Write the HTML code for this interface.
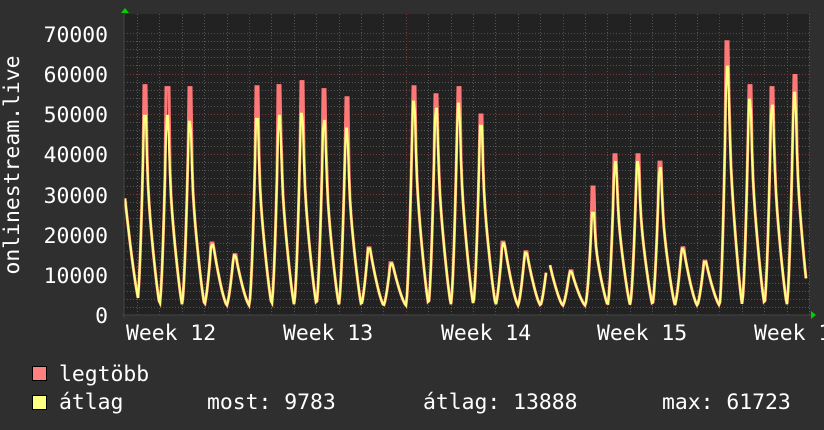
<!DOCTYPE html>
<html><head><meta charset="utf-8"><style>
html,body{margin:0;padding:0;background:#2f2f2f;}
body{width:824px;height:430px;overflow:hidden;position:relative;font-family:"DejaVu Sans Mono","Liberation Mono",monospace;color:#fff;}
svg{position:absolute;left:0;top:0;}
svg text{font-family:"DejaVu Sans Mono","Liberation Mono",monospace;font-size:21.4px;fill:#fff;}
</style></head><body>
<svg id="g" width="824" height="430" xmlns="http://www.w3.org/2000/svg">
<rect x="124" y="14" width="685" height="301" fill="#222222"/>
<g id="grid"></g>
<g id="lines"></g>
<line x1="122" y1="315" x2="814" y2="315" stroke="#444" stroke-width="1"/>
<line x1="124" y1="12" x2="124" y2="318" stroke="#444" stroke-width="1"/>
<polygon points="121,13 125,8 129,13" fill="#00d000"/>
<polygon points="811,311 816,315 811,319" fill="#00d000"/>
<g text-anchor="end">
<text x="108" y="42">70000</text>
<text x="108" y="82">60000</text>
<text x="108" y="122">50000</text>
<text x="108" y="162">40000</text>
<text x="108" y="203">30000</text>
<text x="108" y="243">20000</text>
<text x="108" y="283">10000</text>
<text x="108" y="323">0</text>
</g>
<text transform="translate(19,165) rotate(-90)" text-anchor="middle">onlinestream.live</text>
<text x="126" y="340">Week 12</text>
<text x="283" y="340">Week 13</text>
<text x="441" y="340">Week 14</text>
<text x="597" y="340">Week 15</text>
<text x="754" y="340">Week 1</text>
<rect x="32.5" y="366.5" width="14" height="14" fill="#ff8080" stroke="#000"/>
<rect x="32.5" y="395.5" width="14" height="14" fill="#ffff80" stroke="#000"/>
<text x="59" y="381">legtöbb</text>
<text x="59" y="409">átlag</text>
<text x="207" y="409">most: 9783</text>
<text x="423" y="409">átlag: 13888</text>
<text x="662" y="409">max: 61723</text>
</svg>
<script>
var NS="http://www.w3.org/2000/svg";
function Y(v){return 315-v*0.004025;}
var grid=document.getElementById('grid');
function ln(x1,y1,x2,y2,c){var l=document.createElementNS(NS,'line');l.setAttribute('x1',x1);l.setAttribute('y1',y1);l.setAttribute('x2',x2);l.setAttribute('y2',y2);l.setAttribute('stroke',c);l.setAttribute('stroke-width',1);l.setAttribute('stroke-dasharray','1,2');grid.appendChild(l);}
for(var v=2000;v<=70000;v+=2000){var y=Math.round(Y(v))+0.5;ln(124,y,809,y,v%10000==0?'#7a3a3a':'#555');}
for(var x=137;x<809;x+=22.4){var xx=Math.round(x)+0.5;var maj=[249,406,563,720].some(function(m){return Math.abs(m-x)<3;});ln(xx,14,xx,315,maj?'#7a3a3a':'#555');}
var peaks=[[145,57000,49500],[167.4,56500,49500],[189.8,56500,48000],[212.2,17900,17500],[234.6,15000,14800],[257,56700,48700],[279.4,57000,49500],[301.8,58000,50000],[324.2,56000,48200],[346.6,54000,46300],[369,16700,16500],[391.4,13000,12800],[413.8,56700,53000],[436.2,54700,51200],[458.6,56500,52500],[481,49700,47000],[503.4,18100,17800],[525.8,15700,15500],[548.2,13400,13200],[570.6,11000,10800],[593,31800,25400],[615.4,39800,38000],[637.8,39800,38000],[660.2,38000,36500],[682.6,16700,16500],[705,13400,13200],[727.4,67900,61700],[749.8,57000,53500],[772.2,56500,52000],[794.6,59500,55200]];
var T=2300;
function shape(d,small){
 if(Math.abs(d)<=1)return 1;
 if(d<0){d+=1;var r=(d+7)/7;return r<0?0:Math.pow(r,small?1.5:1.7);}
 d-=1;
 if(d>14)return 0;
 if(small)return Math.pow(1-d/14,1.4);
 return 0.3*Math.exp(-d/1.3)+0.7*Math.pow(1-d/14,1.25);
}
function val(x,idx){
 var best=0;
 for(var i=0;i<peaks.length;i++){
  var p=peaks[i],d=x-p[0],small=p[2]<20000;
  if(d<-10||d>16)continue;
  var v=T+(p[2]-T)*shape(d,small);
  if(idx==1){ if(d>=-1.5&&d<=1.6)v=p[1]; else if(d>1.6&&d<3)v+=(p[1]-p[2])*0.3;}
  if(v>best)best=v;
 }
 if(x<140){best=Math.max(best,T+29000*Math.pow(Math.max(0,1-(x-124)/16),1.3));}
 if(best<T)best=T;
 return best;
}
var lines=document.getElementById('lines');
function poly(idx,col,w){
 var segs=[[125,546],[550,806]];
 segs.forEach(function(s){
  var pts=[];
  for(var x=s[0];x<=s[1];x+=1){var v=val(x,idx);pts.push(x+','+Y(v).toFixed(1));}
  var p=document.createElementNS(NS,'polyline');p.setAttribute('points',pts.join(' '));p.setAttribute('fill','none');p.setAttribute('stroke',col);p.setAttribute('stroke-width',w);lines.appendChild(p);
 });
}
poly(1,'#ff7878',3);
poly(2,'#ffff80',2.2);
</script>
</body></html>
